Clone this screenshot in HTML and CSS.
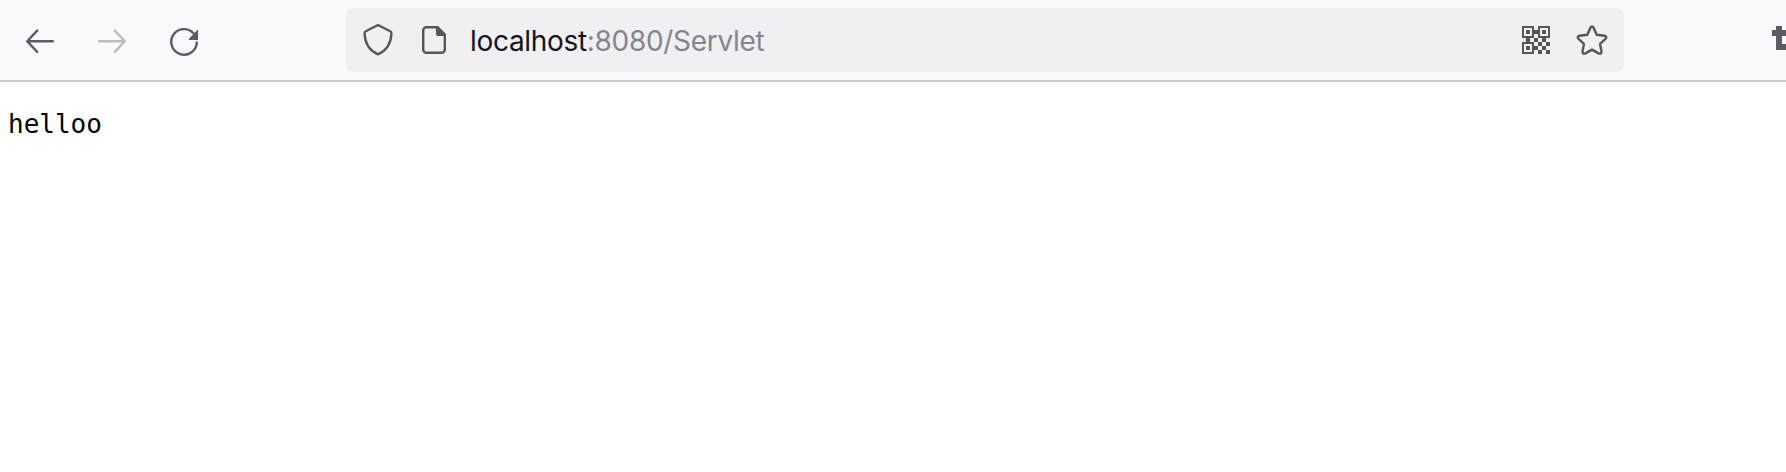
FILE: index.html
```html
<!DOCTYPE html>
<html lang="en">
<head>
<meta charset="utf-8">
<title>localhost:8080/Servlet</title>
<link rel="stylesheet" href="styles.css">
</head>
<body>
<header class="toolbar">
  <nav class="nav">
    <svg class="icon" viewBox="0 0 32 32"><path d="M28.800 15.300H3.500M13.200 4.600L3.200 15.300l10 10.600"/></svg>
    <svg class="icon disabled" viewBox="0 0 32 32"><path d="M3.200 15.300h25.300M18.800 4.600l10 10.700-10 10.600"/></svg>
    <svg class="icon" viewBox="0 0 32 32"><path d="M28.800 16.500A12.800 12.800 0 1 1 25.500 7.300"/><path class="solid" d="M30 3.800v10.200h-8.600q-1.200 0-.4-1.200l7.800-8.400q1.200-1.200 1.200-.6z"/></svg>
  </nav>
  <div class="urlbar">
    <svg class="icon shield" viewBox="0 0 32 32"><path d="M16 3L28.200 9.200Q29.600 10 29.400 12C29 20 26 28 16 32.400C6 28 3 20 2.600 12Q2.400 10 3.800 9.200Z"/></svg>
    <svg class="icon page" viewBox="0 0 32 32"><path d="M8.500 5.200H19l7.800 8v14.300a3.300 3.300 0 0 1-3.300 3.300h-15a3.300 3.300 0 0 1-3.300-3.300v-19A3.300 3.300 0 0 1 8.500 5.200z"/><path class="solid" d="M18 4h2l8 8v2H20a2 2 0 0 1-2-2z"/></svg>
    <span class="url"><span class="host">localhost</span>:8080/Servlet</span>
    <svg class="qr" viewBox="0 0 28 28" shape-rendering="crispEdges">
      <path fill-rule="evenodd" d="M0 0h12v12H0zM2 2v8h8V2zM4 4h4v4H4zM16 0h12v12H16zM18 2v8h8V2zM20 4h4v4h-4zM0 16h12v12H0zM2 18v8h8v-8zM4 20h4v4H4z"/>
      <path d="M12 4h4v4h-4zM4 12h4v4H4zM12 12h4v4h-4zM20 12h4v4h-4zM16 16h4v4h-4zM24 16h4v4h-4zM12 20h4v4h-4zM20 20h4v4h-4zM16 24h4v4h-4zM24 24h4v4h-4z"/>
    </svg>
    <svg class="icon star" viewBox="0 0 32 32"><path d="M14.300 3.900Q16 1 17.700 3.900L20.700 10.700L28.400 11.700Q31.400 12.400 29.500 14.800L24 20L25.500 27.300Q25.600 30.600 22.600 29.400L16 25.600L9.400 29.400Q6.400 30.600 6.500 27.300L8 20L2.500 14.800Q.6 12.400 3.600 11.700L11.300 10.700Z"/></svg>
  </div>
  <svg class="extension" viewBox="0 0 14 24" shape-rendering="crispEdges"><path d="M4 0h6v4h4v6h-4v8h4v6H4V10H0V4h4z"/></svg>
</header>
<main class="content"><pre class="response">helloo</pre></main>
</body>
</html>
```
FILE: styles.css
```css
body {
  margin: 0;
  background: #fff;
  overflow: hidden;
}
.toolbar {
  display: flex;
  align-items: flex-start;
  box-sizing: border-box;
  height: 82px;
  padding-top: 8px;
  background: #f9f9fb;
  border-bottom: 2px solid #ccc;
}
.nav {
  display: flex;
  flex: none;
  gap: 40px;
  box-sizing: border-box;
  width: 346px;
  padding: 18px 0 0 24px;
}
.icon {
  flex: none;
  width: 32px;
  height: 32px;
  overflow: visible;
  fill: none;
  stroke: #55555a;
  stroke-width: 2.4;
  stroke-linecap: round;
  stroke-linejoin: round;
}
.icon .solid { fill: #55555a; stroke: none; }
.nav .icon { stroke: #5b5b66; }
.nav .icon .solid { fill: #5b5b66; stroke: none; }
.nav .icon.disabled { stroke: #bdbdc1; }
.urlbar {
  display: flex;
  flex: none;
  align-items: center;
  box-sizing: border-box;
  width: 1278px;
  height: 64px;
  padding: 0 16px;
  border-radius: 8px;
  background: #f0f0f4;
}
.shield { margin-top: -4px; }
.page { margin: -4px 0 0 24px; }
.url {
  flex: 1;
  margin: 2px 0 0 20px;
  color: #85858a;
  font: 28px/36px Inter, "Liberation Sans", sans-serif;
  letter-spacing: -0.31px;
}
.host { color: #15141a; }
.qr {
  width: 28px;
  height: 28px;
  fill: #55555a;
}
.star { margin: -1px 0 0 26px; }
.extension {
  width: 14px;
  height: 24px;
  margin: 18px 0 0 148px;
  fill: #5b5b66;
}
.content { padding: 26px 8px; }
.response {
  margin: 0;
  color: #000;
  font: 26px/32px "DejaVu Sans Mono", monospace;
}
```
